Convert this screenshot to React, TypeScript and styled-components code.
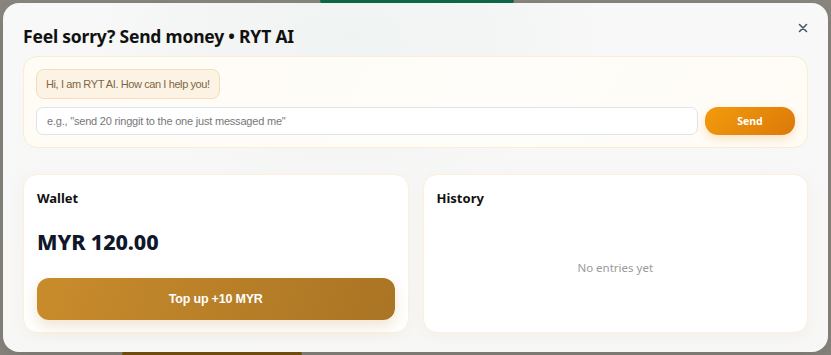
import styled, { createGlobalStyle } from "styled-components";

const GlobalStyle = createGlobalStyle`
  html, body {
    margin: 0;
    padding: 0;
    background: #8a877f;
  }
  * {
    box-sizing: border-box;
  }
`;

const Backdrop = styled.div`
  position: relative;
  width: 831px;
  height: 355px;
  padding: 3px;
  background: #8a877f;
  overflow: hidden;
  font-family: "Noto Sans", "Liberation Sans", sans-serif;
`;

const PageShape = styled.div<{ $left: number; $width: number; $top?: boolean; $color: string }>`
  position: absolute;
  left: ${(p) => p.$left}px;
  width: ${(p) => p.$width}px;
  height: 12px;
  ${(p) => (p.$top ? "top: -6px;" : "bottom: -6px;")}
  border-radius: 6px;
  background: ${(p) => p.$color};
`;

const Modal = styled.div`
  position: relative;
  width: 825px;
  height: 349px;
  border-radius: 16px;
  padding: 18px 20px 19px;
  background:
    radial-gradient(ellipse 260px 160px at 42% 10%, rgba(20, 110, 80, 0.035), transparent),
    linear-gradient(180deg, #f7f8f7, #f7f7f6);
  box-shadow: 0 10px 30px rgba(0, 0, 0, 0.15);
  display: flex;
  flex-direction: column;
`;

const Header = styled.div`
  flex-shrink: 0;
  display: flex;
  align-items: center;
  justify-content: space-between;
  height: 30px;
  margin-bottom: 5px;
`;

const Title = styled.h2`
  margin: 0;
  font-size: 17.5px;
  font-weight: 700;
  color: #111;
  letter-spacing: -0.2px;
`;

const CloseButton = styled.button`
  align-self: flex-start;
  margin-top: 2px;
  border: none;
  background: none;
  padding: 0;
  width: 10px;
  height: 10px;
  display: flex;
  align-items: center;
  justify-content: center;
  color: #475569;
  cursor: pointer;
`;

const ChatBox = styled.div`
  flex-shrink: 0;
  border: 1px solid #fbecd3;
  border-radius: 14px;
  background: linear-gradient(120deg, #fffcf5, #fffdf9 60%, #fffcf6);
  padding: 12px;
  display: flex;
  flex-direction: column;
  gap: 8px;
`;

const Bubble = styled.div`
  align-self: flex-start;
  height: 30px;
  display: flex;
  align-items: center;
  padding: 0 9px;
  border: 1px solid #f5ddb8;
  border-radius: 8px;
  background: #fdf3e5;
  color: #7e6644;
  font-family: "Liberation Sans", Arial, sans-serif;
  font-size: 11px;
  letter-spacing: -0.4px;
`;

const InputRow = styled.div`
  display: flex;
  gap: 7px;
`;

const Input = styled.input`
  flex: 1;
  height: 28px;
  border: 1px solid #dfe3ee;
  border-radius: 7px;
  background: #fff;
  padding: 0 10px;
  font-family: "Liberation Sans", Arial, sans-serif;
  font-size: 11px;
  letter-spacing: -0.2px;
  color: #333;
  outline: none;

  &::placeholder {
    color: #777;
  }
`;

const SendButton = styled.button`
  width: 90px;
  height: 28px;
  border: none;
  border-radius: 13px;
  background: linear-gradient(135deg, #f29b0d, #dc7908);
  color: #fff;
  font-family: "Noto Sans", sans-serif;
  font-size: 10.5px;
  font-weight: 700;
  box-shadow: 0 4px 10px rgba(240, 150, 30, 0.25);
  cursor: pointer;
`;

const Cards = styled.div`
  margin-top: 26px;
  display: grid;
  grid-template-columns: 1fr 1fr;
  gap: 14px;
  flex: 1;
`;

const Card = styled.section`
  border: 1px solid #fcefdb;
  border-radius: 14px;
  background: #fff;
  padding: 13px 13px 12px;
  display: flex;
  flex-direction: column;
  box-shadow: 0 4px 14px rgba(210, 170, 110, 0.08);
`;

const CardTitle = styled.h3`
  margin: 0;
  font-size: 13px;
  font-weight: 700;
  color: #111;
  line-height: 20px;
`;

const Balance = styled.div`
  margin-top: 20px;
  font-size: 21.5px;
  font-weight: 800;
  color: #0f172a;
  line-height: 28px;
  letter-spacing: -0.1px;
`;

const TopUpButton = styled.button`
  margin-top: 22px;
  height: 42px;
  border: none;
  border-radius: 12px;
  background: linear-gradient(110deg, #c98c2c, #a97424);
  color: #fff;
  font-family: "Liberation Sans", Arial, sans-serif;
  font-size: 12.5px;
  font-weight: 700;
  letter-spacing: -0.2px;
  box-shadow: 0 6px 14px rgba(190, 130, 40, 0.22);
  cursor: pointer;
`;

const Empty = styled.div`
  flex: 1;
  display: flex;
  align-items: center;
  justify-content: center;
  padding-top: 6px;
  font-size: 11.5px;
  color: #9a9a9a;
`;

export default function App() {
  return (
    <>
      <GlobalStyle />
      <Backdrop>
        <PageShape $top $left={320} $width={194} $color="#0e6a47" />
        <PageShape $left={122} $width={180} $color="#7d5410" />
        <Modal>
          <Header>
            <Title>Feel sorry? Send money • RYT AI</Title>
            <CloseButton aria-label="Close">
              <svg width="10" height="10" viewBox="0 0 10 10">
                <path d="M1.5 1.5 L8.5 8.5 M8.5 1.5 L1.5 8.5" stroke="currentColor" strokeWidth="1.6" strokeLinecap="round" />
              </svg>
            </CloseButton>
          </Header>
          <ChatBox>
            <Bubble>Hi, I am RYT AI. How can I help you!</Bubble>
            <InputRow>
              <Input placeholder={'e.g., "send 20 ringgit to the one just messaged me"'} />
              <SendButton>Send</SendButton>
            </InputRow>
          </ChatBox>
          <Cards>
            <Card>
              <CardTitle>Wallet</CardTitle>
              <Balance>MYR 120.00</Balance>
              <TopUpButton>Top up +10 MYR</TopUpButton>
            </Card>
            <Card>
              <CardTitle>History</CardTitle>
              <Empty>No entries yet</Empty>
            </Card>
          </Cards>
        </Modal>
      </Backdrop>
    </>
  );
}
